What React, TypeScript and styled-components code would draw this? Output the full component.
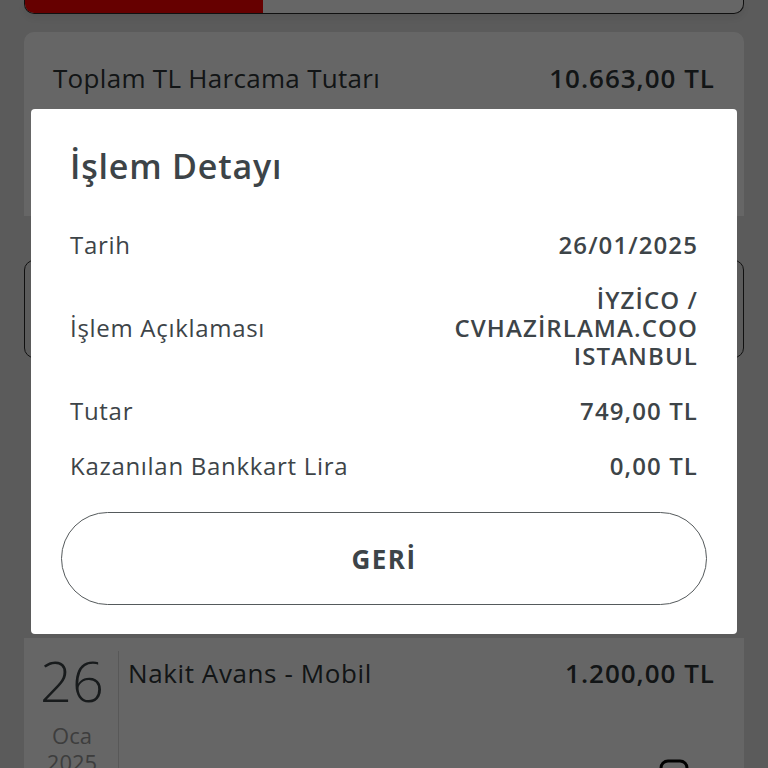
import React from "react";
import styled, { createGlobalStyle } from "styled-components";

const GlobalStyle = createGlobalStyle`
  html, body {
    margin: 0;
    padding: 0;
    height: 768px;
    overflow: hidden;
    background: #e4e4e4;
    font-family: "Open Sans", "Noto Sans", sans-serif;
    color: #3d4448;
  }
`;

const Page = styled.div`
  display: flex;
  flex-direction: column;
  padding: 0 24px;
  height: 768px;
  overflow: hidden;
`;

const ProgressTrack = styled.div`
  flex-shrink: 0;
  height: 13px;
  background: #ffffff;
  border: 1.5px solid #2a2a2a;
  border-top: none;
  border-radius: 0 0 10px 10px;
  overflow: hidden;
  box-shadow: 0 4px 8px rgba(0, 0, 0, 0.08);
`;

const ProgressFill = styled.div`
  height: 100%;
  background: #ff0000;
`;

const SummaryCard = styled.div`
  flex-shrink: 0;
  margin-top: 18px;
  height: 184px;
  background: #ffffff;
  border-radius: 10px 10px 0 0;
  padding: 30px 29px 0 29px;
  box-sizing: border-box;
`;

const SummaryRow = styled.div`
  display: flex;
  justify-content: space-between;
  align-items: center;
  font-size: 26px;
  line-height: 32px;
  letter-spacing: 0.3px;
  color: #2f3538;
`;

const Amount = styled.span`
  font-weight: 600;
  letter-spacing: 1px;
`;

const OutlinedCard = styled.div`
  flex-shrink: 0;
  margin-top: 44px;
  height: 98px;
  border: 1.5px solid #2a2a2a;
  border-radius: 10px;
  box-sizing: border-box;
`;

const TransactionCard = styled.div`
  flex-shrink: 0;
  margin-top: 280px;
  height: 200px;
  background: #ffffff;
  display: flex;
  padding: 13px 29px 0 16px;
`;

const DateColumn = styled.div`
  width: 64px;
  display: flex;
  flex-direction: column;
  align-items: center;
  padding-right: 14px;
  border-right: 1.5px solid #dcdcdc;
`;

const Day = styled.div`
  font-size: 56px;
  font-weight: 300;
  line-height: 58px;
`;

const MonthYear = styled.div<{ $first?: boolean }>`
  font-size: 22px;
  line-height: 27px;
  color: #9a9a9a;
  margin-top: ${(p) => (p.$first ? "13px" : "0")};
`;

const TransactionBody = styled.div`
  flex: 1;
  display: flex;
  flex-direction: column;
  padding: 6px 0 0 9px;
`;

const TransactionRow = styled.div`
  display: flex;
  justify-content: space-between;
  font-size: 26px;
  line-height: 32px;
  letter-spacing: 0.6px;
  color: #2f3538;
`;

const TransactionIcon = styled.div`
  align-self: flex-end;
  margin-top: 70px;
  margin-right: 26px;
`;

const Overlay = styled.div`
  position: fixed;
  inset: 0;
  background: rgba(0, 0, 0, 0.6);
  display: flex;
  justify-content: center;
  align-items: flex-start;
  padding-top: 109px;
`;

const Modal = styled.div`
  width: 706px;
  background: #ffffff;
  border-radius: 4px;
  padding: 37px 30px 29px 30px;
  box-sizing: border-box;
  display: flex;
  flex-direction: column;
`;

const Title = styled.h2`
  margin: 0 0 45px 0;
  padding: 0 9px;
  font-size: 34px;
  line-height: 40px;
  font-weight: 600;
  letter-spacing: 0.8px;
`;

const DetailList = styled.div`
  display: flex;
  flex-direction: column;
  gap: 27px;
  padding: 0 9px;
`;

const DetailRow = styled.div`
  display: flex;
  justify-content: space-between;
  align-items: center;
  font-size: 24px;
  line-height: 28px;
`;

const Label = styled.span`
  letter-spacing: 0.7px;
`;

const Value = styled.span`
  font-weight: 600;
  letter-spacing: 1.1px;
  text-align: right;
  max-width: 270px;
`;

const BackButton = styled.button`
  margin-top: 32px;
  height: 93px;
  border: 1.5px solid #555a5c;
  border-radius: 47px;
  background: #ffffff;
  font-family: "Open Sans", "Noto Sans", sans-serif;
  font-size: 26px;
  font-weight: 700;
  letter-spacing: 1.5px;
  color: #3d4448;
  cursor: pointer;
`;

const details = [
  { label: "Tarih", value: "26/01/2025" },
  { label: "İşlem Açıklaması", value: "İYZİCO / CVHAZİRLAMA.COO ISTANBUL" },
  { label: "Tutar", value: "749,00 TL" },
  { label: "Kazanılan Bankkart Lira", value: "0,00 TL" },
];

export default function App() {
  return (
    <>
      <GlobalStyle />
      <Page>
        <ProgressTrack>
          <ProgressFill style={{ width: `${(239 / 720) * 100}%` }} />
        </ProgressTrack>
        <SummaryCard>
          <SummaryRow>
            <span>Toplam TL Harcama Tutarı</span>
            <Amount>10.663,00 TL</Amount>
          </SummaryRow>
        </SummaryCard>
        <OutlinedCard />
        <TransactionCard>
          <DateColumn>
            <Day>26</Day>
            <MonthYear $first>Oca</MonthYear>
            <MonthYear>2025</MonthYear>
          </DateColumn>
          <TransactionBody>
            <TransactionRow>
              <span>Nakit Avans - Mobil</span>
              <Amount>1.200,00 TL</Amount>
            </TransactionRow>
            <TransactionIcon>
              <svg width="30" height="34" viewBox="0 0 30 34" fill="none">
                <rect x="2" y="2" width="26" height="30" rx="7" stroke="#000" strokeWidth="3" />
              </svg>
            </TransactionIcon>
          </TransactionBody>
        </TransactionCard>
      </Page>
      <Overlay>
        <Modal>
          <Title>İşlem Detayı</Title>
          <DetailList>
            {details.map((d) => (
              <DetailRow key={d.label}>
                <Label>{d.label}</Label>
                <Value>{d.value}</Value>
              </DetailRow>
            ))}
          </DetailList>
          <BackButton>GERİ</BackButton>
        </Modal>
      </Overlay>
    </>
  );
}
